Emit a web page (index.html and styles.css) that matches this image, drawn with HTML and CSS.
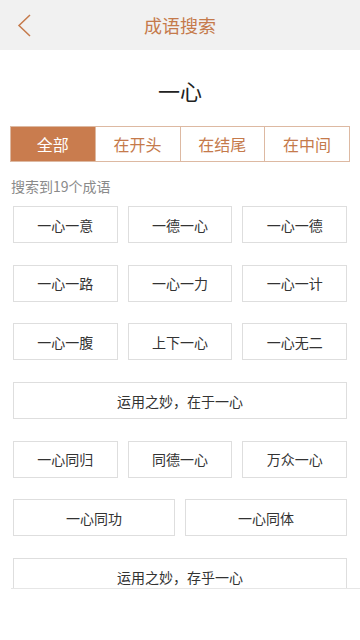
FILE: index.html
```html
<!DOCTYPE html>
<html lang="zh-CN">
<head>
    <meta charset="UTF-8">
    <meta name="viewport" content="width=device-width, initial-scale=1.0">
    <title>成语搜索</title>
    <link rel="stylesheet" href="styles.css">
</head>
<body>
    <div class="header">
        <svg class="back" width="16" height="24" viewBox="0 0 16 24">
            <polyline points="13,2 2,12.5 13,23" fill="none" stroke="#c57a4b" stroke-width="1.5"/>
        </svg>
        <h1>成语搜索</h1>
    </div>

    <div class="word">一心</div>

    <!-- Filter tabs -->
    <div class="tabs">
        <button class="tab active">全部</button>
        <button class="tab">在开头</button>
        <button class="tab">在结尾</button>
        <button class="tab">在中间</button>
    </div>

    <div class="count">搜索到19个成语</div>

    <!-- Results -->
    <div class="results">
        <div class="grid">
            <div class="chip third">一心一意</div>
            <div class="chip third">一德一心</div>
            <div class="chip third">一心一德</div>
            <div class="chip third">一心一路</div>
            <div class="chip third">一心一力</div>
            <div class="chip third">一心一计</div>
            <div class="chip third">一心一腹</div>
            <div class="chip third">上下一心</div>
            <div class="chip third">一心无二</div>
            <div class="chip full">运用之妙，在于一心</div>
            <div class="chip third">一心同归</div>
            <div class="chip third">同德一心</div>
            <div class="chip third">万众一心</div>
            <div class="chip half">一心同功</div>
            <div class="chip half">一心同体</div>
            <div class="chip full">运用之妙，存乎一心</div>
        </div>
    </div>
</body>
</html>
```

FILE: styles.css
```css
body {
    margin: 0;
    background: #ffffff;
    font-family: "Noto Sans CJK SC", "Noto Sans", sans-serif;
    color: #333333;
}
.header {
    height: 50px;
    background: #f1f1f1;
    display: flex;
    align-items: center;
    justify-content: center;
    position: relative;
}
.header h1 {
    margin: 0;
    font-size: 18px;
    font-weight: normal;
    color: #c57a4b;
}
.back {
    position: absolute;
    left: 17px;
    top: 13px;
}
.word {
    text-align: center;
    font-size: 22px;
    line-height: 30px;
    padding-top: 25px;
    color: #222222;
}
.tabs {
    display: flex;
    margin: 21px 10px 0;
    border: 1px solid #ddb9a2;
    height: 34px;
}
.tab {
    flex: 1;
    border: none;
    border-left: 1px solid #ddb9a2;
    background: #ffffff;
    color: #c57a4b;
    font-family: inherit;
    font-size: 16px;
    padding: 0;
}
.tab:first-child {
    border-left: none;
}
.tab.active {
    background: #c97c4e;
    color: #ffffff;
}
.count {
    margin: 15px 0 0 11px;
    font-size: 14px;
    line-height: 18px;
    color: #8a8a8a;
}
.results {
    height: 393px;
    overflow: hidden;
    border-bottom: 1px solid #e6e6e6;
    margin-left: 11px;
}
.grid {
    display: grid;
    grid-template-columns: repeat(6, 1fr);
    column-gap: 10px;
    row-gap: 21.7px;
    padding: 11px 13px 0 2px;
}
.chip {
    height: 35px;
    border: 1px solid #dedede;
    display: flex;
    align-items: center;
    justify-content: center;
    font-size: 14px;
    color: #333333;
}
.third {
    grid-column: span 2;
}
.half {
    grid-column: span 3;
}
.full {
    grid-column: span 6;
}
```
